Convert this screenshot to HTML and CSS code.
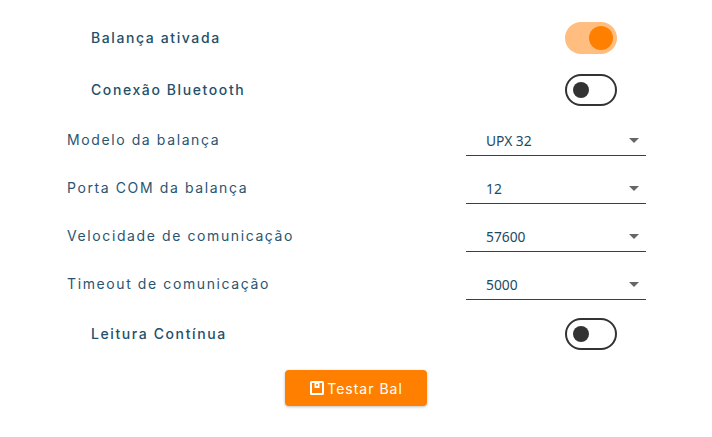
FILE: index.html
```html
<!DOCTYPE html>
<html lang="pt">
<head>
<meta charset="utf-8">
<title>Balança</title>
<link rel="stylesheet" href="styles.css">
</head>
<body>
<main class="form">
  <div class="toggle-row">
    <span class="toggle-label">Balança ativada</span>
    <span class="toggle on"><span class="knob"></span></span>
  </div>
  <div class="toggle-row">
    <span class="toggle-label">Conexão Bluetooth</span>
    <span class="toggle"><span class="knob"></span></span>
  </div>
  <div class="select-row">
    <span class="select-label">Modelo da balança</span>
    <div class="select"><span>UPX 32</span><i class="arrow"></i></div>
  </div>
  <div class="select-row">
    <span class="select-label">Porta COM da balança</span>
    <div class="select"><span>12</span><i class="arrow"></i></div>
  </div>
  <div class="select-row">
    <span class="select-label">Velocidade de comunicação</span>
    <div class="select"><span>57600</span><i class="arrow"></i></div>
  </div>
  <div class="select-row">
    <span class="select-label">Timeout de comunicação</span>
    <div class="select"><span>5000</span><i class="arrow"></i></div>
  </div>
  <div class="toggle-row">
    <span class="toggle-label">Leitura Contínua</span>
    <span class="toggle"><span class="knob"></span></span>
  </div>
  <div class="actions">
    <button class="btn" type="button">
      <svg class="btn-icon" viewBox="0 0 16 16" width="16" height="16" aria-hidden="true">
        <path fill="#fff" fill-rule="evenodd" d="M2.500 1h11A1.500 1.500 0 0 1 15 2.500v11a1.500 1.500 0 0 1-1.500 1.500h-11A1.500 1.500 0 0 1 1 13.500v-11A1.500 1.500 0 0 1 2.500 1zM3 3v10h10V3h-2.500v5h-5V3H3zm5 .9a1 1 0 1 0 0 2 1 1 0 0 0 0-2z"/>
      </svg>
      <span>Testar Bal</span>
    </button>
  </div>
</main>
</body>
</html>
```
FILE: styles.css
```css
* { box-sizing: border-box; }
html, body { margin: 0; background: #fff; }
body { width: 712px; height: 437px; overflow: hidden; font-family: "Inter", "Liberation Sans", sans-serif; }
.form { display: flex; flex-direction: column; padding: 12px 66px 0 67px; }
.toggle-row { display: flex; align-items: center; justify-content: space-between; height: 52px; padding: 0 29px 0 24px; }
.toggle-label { padding-bottom: 2px; font-size: 14px; font-weight: 500; letter-spacing: 1.6px; color: #24506a; }
.toggle { display: flex; align-items: center; width: 52px; height: 32px; border: 2px solid #333; border-radius: 16px; padding-left: 6px; }
.toggle .knob { width: 16px; height: 16px; border-radius: 50%; background: #333; }
.toggle.on { background: #ffbd80; border: 0; justify-content: flex-end; padding: 0 4px 0 0; }
.toggle.on .knob { width: 24px; height: 24px; background: #ff8000; }
.select-row { display: flex; align-items: center; justify-content: space-between; height: 48px; }
.select-label { padding-bottom: 2px; font-size: 14px; font-weight: 400; letter-spacing: 1.6px; color: #2a5570; }
.select { display: flex; align-items: center; justify-content: space-between; width: 180px; height: 32px; padding: 2px 7px 0 20px; border-bottom: 1px solid #1d4a63; font-family: "Noto Sans", sans-serif; font-size: 13.8px; color: #1d4a63; }
.arrow { width: 0; height: 0; border-left: 5px solid transparent; border-right: 5px solid transparent; border-top: 5px solid #666; }
.actions { display: flex; justify-content: center; padding: 10px 1px 0 0; }
.btn { display: flex; align-items: center; justify-content: center; gap: 2px; width: 142px; height: 36px; border: 0; border-radius: 4px; background: #ff8000; color: #fff; font-family: "Inter", sans-serif; font-size: 14px; letter-spacing: 1px; box-shadow: 0 1px 3px rgba(0,0,0,.25); }
```
